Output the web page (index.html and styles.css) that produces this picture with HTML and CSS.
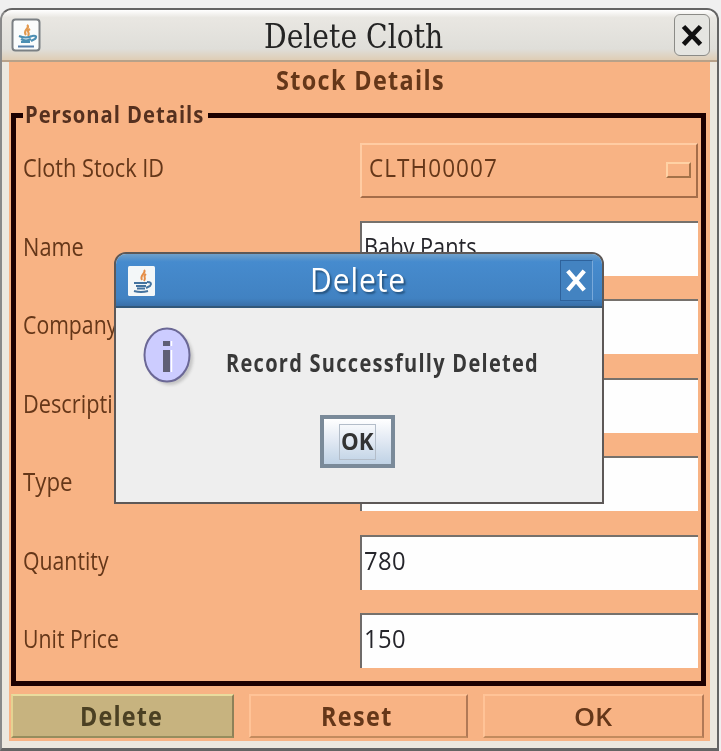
FILE: index.html
```html
<!DOCTYPE html>
<html lang="en">
<head>
<meta charset="utf-8">
<title>Delete Cloth</title>
<link rel="stylesheet" href="styles.css">
</head>
<body>
<main class="window">
  <header class="titlebar">
    <svg class="java" viewBox="0 0 30 34"><rect x="1.5" y="1.5" width="27" height="31" rx="3" fill="#fafcfc" stroke="#7b8084" stroke-width="2"/><path d="M16 7c4 3-5 5-1 10M19 11c-5 3 1 3-2 7" fill="none" stroke="#e39a50" stroke-width="2.2"/><path d="M8 18q7 3 13 0M10 21q5 3 10 0M21 18q6-1 3 3l-4 2M10 24h9" fill="none" stroke="#4c8fb3" stroke-width="2.2"/><path d="M7 28.500h16" stroke="#557faa" stroke-width="2"/></svg>
    <h1><span class="t t-title">Delete Cloth</span></h1>
    <button class="close" aria-label="Close"><svg viewBox="0 0 36 42"><path d="M9 12l18 19M27 12L9 31" stroke="#111" stroke-width="5"/></svg></button>
  </header>
  <section class="content">
    <h2><span class="t t-stock">Stock Details</span></h2>
    <div class="group">
      <div class="legend"><span class="t t-legend">Personal Details</span></div>
      <div class="row"><label><span class="t t-id">Cloth Stock ID</span></label><div class="combo"><span class="t t-code">CLTH00007</span><i class="knob"></i></div></div>
      <div class="row"><label><span class="t t-name">Name</span></label><div class="field"><span class="t t-baby">Baby Pants</span></div></div>
      <div class="row"><label><span class="t t-company">Company</span></label><div class="field"></div></div>
      <div class="row"><label><span class="t t-desc">Description</span></label><div class="field"></div></div>
      <div class="row"><label><span class="t t-type">Type</span></label><div class="field"></div></div>
      <div class="row"><label><span class="t t-qty">Quantity</span></label><div class="field"><span class="t t-num">780</span></div></div>
      <div class="row"><label><span class="t t-price">Unit Price</span></label><div class="field"><span class="t t-num">150</span></div></div>
    </div>
    <div class="actions">
      <button class="action selected"><span class="t t-delete">Delete</span></button>
      <button class="action"><span class="t t-reset">Reset</span></button>
      <button class="action"><span class="t t-ok">OK</span></button>
    </div>
  </section>
</main>
<div class="dialog" role="dialog">
  <header class="dialog-bar">
    <svg class="java-small" viewBox="0 0 27 30"><rect width="27" height="30" rx="1.500" fill="#f3f7f8"/><path d="M16 4c3 3-5 5-2 10M18 8c-4 3 1 3-2 7" fill="none" stroke="#e58d45" stroke-width="2"/><path d="M6 17h13M8 20h10M19 16q6 0 3 4l-4 2M6 25q7 2 14 0M9 22.500h8" fill="none" stroke="#44739f" stroke-width="2"/></svg>
    <h2><span class="t t-dialog">Delete</span></h2>
    <button class="dialog-close" aria-label="Close"><svg viewBox="0 0 32 40"><path d="M7 10l17 20M24 10L7 30" stroke="#fff" stroke-width="4.500"/></svg></button>
  </header>
  <div class="message">
    <svg class="info" viewBox="0 0 54 62"><ellipse cx="28" cy="31" rx="23" ry="27" fill="#777" opacity=".35" class="shade"/><ellipse cx="25" cy="28" rx="22.500" ry="26.500" fill="#ccccff" stroke="#6b6896" stroke-width="2"/><path d="M21 14h7v5h-7zM21 23h7v22h-7z" fill="#5f5f75"/><path d="M29.500 23v22M29.500 14v5" stroke="#fff" stroke-width="1.500"/></svg>
    <span class="t t-message">Record Successfully Deleted</span>
  </div>
  <button class="confirm"><span class="focus"><span class="t t-confirm">OK</span></span></button>
</div>
</body>
</html>
```
FILE: styles.css
```css
* { box-sizing: border-box; }
body { margin: 0; width: 721px; height: 751px; overflow: hidden; background: #f0f0f0; padding-top: 8px; font: 25px/30px "Open Sans", "Noto Sans", sans-serif; color: #653719; position: relative; }
h1, h2 { margin: 0; font-weight: inherit; }
button { padding: 0; margin: 0; font: inherit; color: inherit; background: none; border: 0; }
svg { display: block; }
.t { display: inline-block; white-space: nowrap; transform: scaleX(var(--s, .87)); transform-origin: 0 50%; }
.window { width: 719px; height: 743px; border: 2px solid #646464; border-left-color: #898989; border-bottom-width: 3px; border-radius: 12px 12px 0 0; background: #ece8df; padding: 0 7px 7px; }
.titlebar { height: 52px; margin: 0 -7px; border-radius: 10px 10px 0 0; border-bottom: 2px solid #b7a189; background: linear-gradient(#fff, #e9e7e2 15%, #dfded9 78%, #dfcdb5); display: flex; align-items: flex-start; padding: 4px 7px 0 9px; color: #242424; }
.java { width: 30px; height: 34px; margin-top: 4px; }
.titlebar h1 { width: 179px; height: 40px; font: 34px/40px "DejaVu Serif", serif; margin: 2px 0 0 223px; }
.close { width: 36px; height: 42px; margin-left: auto; border: 1px solid #8b8b87; border-radius: 6px; background: #e5e5e1; }
.close svg { width: 34px; height: 40px; }
.content { height: 679px; background: #f8b384; padding: 1px 0 0 2px; }
.content h2 { height: 34px; font-weight: 700; font-size: 26px; line-height: 34px; padding-left: 265px; }
.group { width: 695px; height: 573px; margin-top: 16px; border: 5px solid #1c0000; padding: 25px 4px 0 7px; display: flex; flex-direction: column; gap: 23.500px; position: relative; }
.legend { position: absolute; left: 7px; top: -19px; width: 185px; height: 30px; padding-left: 2px; background: #f8b384; font-weight: 700; font-size: 23px; color: #55301f; }
.row { height: 55px; flex: none; display: grid; grid-template-columns: 337px 338px; }
.row label { display: block; padding-top: 9px; }
.combo, .field { height: 55px; padding: 10px 0 0 3px; }
.combo { padding-left: 7px; border: 2px solid #ffcca3; border-right-color: #a56d49; border-bottom-color: #a56d49; display: flex; justify-content: space-between; padding-top: 7px; }
.knob { width: 25px; height: 16px; margin: 10px 5px 0 0; border: 2px solid #ffd2a5; border-right-color: #a47249; border-bottom-color: #a47249; }
.field { margin-top: -1px; background: #fefefe; border-left: 2px solid #6f6b69; border-top: 2px solid #76716c; color: #25252b; padding: 8px 0 0 2px; }
.actions { display: grid; grid-template-columns: 223px 219px 221px; column-gap: 15px; margin-top: 8px; }
.action { height: 44px; text-align: left; font-weight: 700; font-size: 26px; line-height: 30px; border: 2px solid #ffc397; border-right-color: #b17956; border-bottom-color: #c38b5e; }
.selected { background: #c7b37f; color: #4b4023; border-color: #e9dc9e #8e8159 #968d5d #e4d392; }
.dialog { position: absolute; left: 114px; top: 252px; width: 490px; height: 252px; border: 2px solid #5d5857; border-radius: 12px 12px 0 0; background: #eee; overflow: hidden; }
.dialog-bar { height: 54px; background: linear-gradient(#6fa0ca, #468bce 15%, #4182c2 85%, #396fa8); border-bottom: 2px solid #315779; display: flex; align-items: flex-start; padding: 6px 9px 0 12px; color: #fff; }
.java-small { width: 27px; height: 30px; margin-top: 6px; }
.dialog-bar h2 { width: 96px; margin-left: 155px; font-size: 33px; line-height: 40px; text-shadow: 2px 2px 2px #24517c; }
.dialog-close { width: 33px; height: 41px; margin-left: auto; border: 1px solid #2e629b; border-right-color: #79a9da; background: #4383c1; }
.dialog-close svg { width: 31px; height: 39px; }
.message { height: 88px; display: flex; color: #383838; font-weight: 700; padding: 19px 0 0 26px; }
.info { width: 54px; height: 62px; flex: none; }
.shade { filter: blur(1.5px); }
.confirm { display: block; width: 75px; height: 53px; margin: 19px 0 0 204px; border: 4px solid #7a8a99; background: linear-gradient(#fff, #e3eaf4 45%, #bfd2e5); padding: 0 0 0 15px; color: #333; text-align: left; font-weight: 700; font-size: 23px; }
.focus { display: block; width: 37px; height: 36px; border: 1px solid #b3bdc9; line-height: 32px; padding-left: 1px; }
.t-title { --s: .83; }
.t-stock { --s: .9; letter-spacing: 1.5px; }
.t-legend { --s: .88; letter-spacing: 1.1px; }
.t-code { --s: .9; letter-spacing: 1.2px; }
.t-type { --s: .89; }
.t-company { --s: .85; }
.t-qty, .t-price { --s: .85; }
.t-num { --s: .95; letter-spacing: .4px; }
.t-dialog { --s: .91; letter-spacing: 1px; }
.t-message { --s: .8; letter-spacing: 1.6px; margin: 20px 0 0 30px; }
.t-confirm { --s: .97; }
.t-delete { --s: .9; letter-spacing: 1.3px; margin-left: 67px; }
.t-reset { --s: .9; letter-spacing: 1.5px; margin-left: 70px; }
.t-ok { --s: 1.03; margin-left: 89px; font-weight: 600; }
```
